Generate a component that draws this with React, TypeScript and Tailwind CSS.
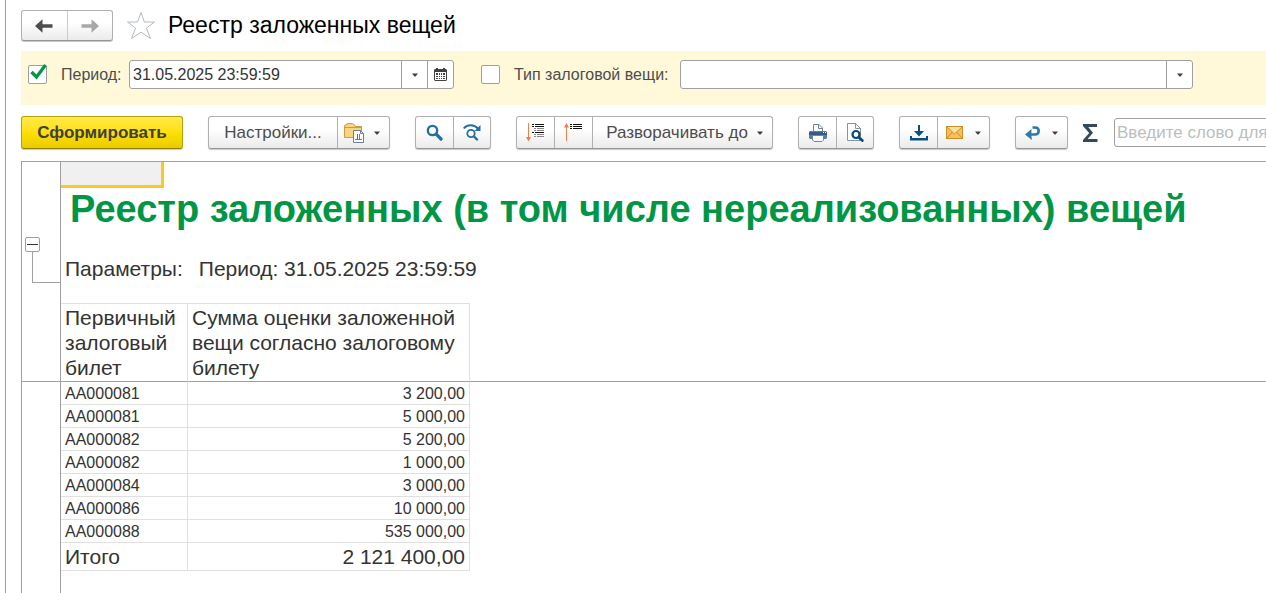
import type { ReactNode } from "react";

const rows: [string, string][] = [
  ["АА000081", "3 200,00"],
  ["АА000081", "5 000,00"],
  ["АА000082", "5 200,00"],
  ["АА000082", "1 000,00"],
  ["АА000084", "3 000,00"],
  ["АА000086", "10 000,00"],
  ["АА000088", "535 000,00"],
];

function Caret() {
  return (
    <svg width="6" height="4" viewBox="0 0 6 4" aria-hidden="true" className="shrink-0">
      <path d="M0 0.500H6L3.500 3.500H2.500Z" fill="#404040" />
    </svg>
  );
}

function Arrow({ color, flip }: { color: string; flip?: boolean }) {
  return (
    <svg width="18" height="14" viewBox="0 0 18 14" aria-hidden="true">
      <path
        d={flip ? "M18 7L10.500 0.300V5.300H0.500V8.700H10.500V13.700Z" : "M0 7L7.500 0.300V5.300H17.500V8.700H7.500V13.700Z"}
        fill={color}
      />
    </svg>
  );
}

function StarIcon() {
  return (
    <svg width="30" height="29" viewBox="0 0 30 29" aria-hidden="true">
      <path
        d="M15 1.500L18.400 11H28.500L20.400 17.100L24.500 27.500L15 21.200L5.500 27.500L9.600 17.100L1.500 11H11.600Z"
        fill="#fff"
        stroke="#b3bac2"
        strokeWidth="1"
      />
    </svg>
  );
}

function CalendarIcon() {
  return (
    <svg width="13" height="13" viewBox="0 0 13 13" aria-hidden="true">
      <path d="M1 1H2V0H4V1H9V0H11V1H12L13 2V12L12 13H1L0 12V2Z" fill="#404040" />
      <path d="M1 4H12V12H1Z" fill="#fff" />
      <path
        d="M2 5h2v2H2zM5 5h1v2H5zM7 5h1v2H7zM9 5h2v2H9zM2 8h2v1H2zM5 8h1v1H5zM7 8h1v1H7zM9 8h2v1H9zM2 10h2v1H2zM5 10h1v1H5zM7 10h1v1H7zM9 10h2v1H9z"
        fill="#404040"
      />
    </svg>
  );
}

function FolderReportIcon() {
  return (
    <svg width="21" height="21" viewBox="0 0 21 21" aria-hidden="true">
      <path d="M0.500 15.500V3.500L4 1.500H8.500L11 3.500V4.500H17.500V15.500Z" fill="#f6d480" stroke="#cf9b3c" />
      <path d="M1 5.500H17.500V7" fill="none" stroke="#cf9b3c" />
      <path d="M9.500 8.500H16.500L19.500 11.500V20.500H9.500Z" fill="#fff" stroke="#6d8096" />
      <path d="M16.500 8.500V11.500H19.500" fill="none" stroke="#6d8096" />
      <path d="M11 17.500H18" stroke="#6d8096" />
      <path d="M13.500 12V17" stroke="#e8321e" />
      <path d="M15.500 12V17" stroke="#2fa84a" />
    </svg>
  );
}

function SearchIcon() {
  return (
    <svg width="17" height="17" viewBox="0 0 17 17" aria-hidden="true">
      <circle cx="6.500" cy="6.500" r="4.700" fill="none" stroke="#22709f" strokeWidth="2.300" />
      <path d="M10.200 10.200L15 15" stroke="#22709f" strokeWidth="3.200" strokeLinecap="round" />
    </svg>
  );
}

function SearchNextIcon() {
  return (
    <svg width="18" height="17" viewBox="0 0 18 17" aria-hidden="true">
      <path d="M0.800 4.500C4 0 11 0 15 4.500" fill="none" stroke="#22709f" strokeWidth="2" />
      <path d="M17.500 1V7H11.500Z" fill="#22709f" />
      <circle cx="8" cy="9.500" r="3.700" fill="none" stroke="#22709f" strokeWidth="1.800" />
      <path d="M11 12.500L14 15.500" stroke="#22709f" strokeWidth="2.400" strokeLinecap="round" />
    </svg>
  );
}

function ExpandIcon() {
  return (
    <svg width="20" height="19" viewBox="0 0 20 19" aria-hidden="true">
      <path d="M2 0h1v14H2z" fill="#ee7f4b" />
      <path d="M0 14H5L2.500 18.500Z" fill="#ee7f4b" />
      <path d="M6 1h2v1H6zM9 1h9v1H9zM6 3h2v1H6zM9 3h9v1H9zM6 9h2v1H6zM9 9h9v1H9z" fill="#111" />
      <path d="M8 5h2v1H8zM11 5h7v1h-7zM8 7h2v1H8zM11 7h7v1h-7zM8 11h2v1H8zM11 11h7v1h-7zM8 13h2v1H8zM11 13h7v1h-7z" fill="#888" />
    </svg>
  );
}

function CollapseIcon() {
  return (
    <svg width="20" height="19" viewBox="0 0 20 19" aria-hidden="true">
      <path d="M2 4h1v14H2z" fill="#ee7f4b" />
      <path d="M0 4.500H5L2.500 0Z" fill="#ee7f4b" />
      <path d="M6 1h2v1H6zM9 1h9v1H9zM6 3h2v1H6zM9 3h9v1H9zM6 5h2v1H6zM9 5h9v1H9z" fill="#111" />
    </svg>
  );
}

function PrinterIcon() {
  return (
    <svg width="18" height="18" viewBox="0 0 18 18" aria-hidden="true">
      <path d="M4.500 8V0.500H10L13.500 4V8" fill="#fff" stroke="#71849c" />
      <path d="M9.500 0.500V4.500H13.500" fill="none" stroke="#71849c" />
      <path d="M1 7H17L18 8V14L17 15H1L0 14V8Z" fill="#5b7ca6" />
      <path d="M0 8h18v3H0z" fill="#365b88" />
      <path d="M3.500 11.500H14.500V16L13 17.500H5L3.500 16Z" fill="#fff" stroke="#71849c" />
      <path d="M14 8h1v1h-1zM16 8h1v1h-1z" fill="#fff" />
    </svg>
  );
}

function PreviewIcon() {
  return (
    <svg width="18" height="19" viewBox="0 0 18 19" aria-hidden="true">
      <path d="M1.500 0.500H9.500L14.500 5.500V17.500H1.500Z" fill="#fff" stroke="#8494a6" />
      <path d="M9.500 0.500V5.500H14.500" fill="none" stroke="#8494a6" />
      <circle cx="10" cy="11.500" r="3.500" fill="#fff" stroke="#0a4a78" strokeWidth="2.200" />
      <path d="M13 14.500L16.300 17.500" stroke="#0a4a78" strokeWidth="2.800" strokeLinecap="round" />
    </svg>
  );
}

function DownloadIcon() {
  return (
    <svg width="18" height="16" viewBox="0 0 18 16" aria-hidden="true">
      <path d="M8 0H10V6H14L9 11.500L4 6H8Z" fill="#0a4f80" />
      <path d="M0 11H2V13H16V11H18V15.500H0Z" fill="#0a4f80" />
    </svg>
  );
}

function MailIcon() {
  return (
    <svg width="17" height="13" viewBox="0 0 17 13" aria-hidden="true">
      <rect x="0.500" y="0.500" width="16" height="12" fill="#f4c15d" stroke="#cf8d27" />
      <path d="M1 1L8.500 8L16 1" fill="#fce0a0" stroke="#cf8d27" />
      <path d="M1 12L6.300 6.200M16 12L10.700 6.200" stroke="#cf8d27" />
    </svg>
  );
}

function ReturnIcon() {
  return (
    <svg width="16" height="14" viewBox="0 0 16 14" aria-hidden="true">
      <path d="M7.500 1.500H10C12.500 1.500 13.700 3 13.700 5C13.700 7.300 12.500 8.500 10 8.500H5" fill="none" stroke="#2f78a8" strokeWidth="2.600" />
      <path d="M0 8.500L6.500 3Q5.800 8.500 7 14Z" fill="#2f78a8" />
    </svg>
  );
}

function SigmaIcon() {
  return (
    <svg width="15" height="18" viewBox="0 0 15 18" aria-hidden="true">
      <path d="M0 0H14V3H5.200L10 8.700L4.600 15H14.500V18H0V16L6.200 9L0 2Z" fill="#35495a" />
    </svg>
  );
}

function Group({ children }: { children: ReactNode }) {
  return (
    <div className="flex h-[33px] shrink-0 divide-x divide-[#b0b0b0] rounded-[3px] border border-[#b0b0b0] border-b-[#959595] bg-linear-to-b from-white from-40% to-[#ebebeb] shadow-[0_1px_1px_#c8c8c8]">
      {children}
    </div>
  );
}

function Tool({ label, size, children }: { label: string; size: string; children: ReactNode }) {
  return (
    <button type="button" aria-label={label} className={`flex items-center justify-center ${size}`}>
      {children}
    </button>
  );
}

const field = "flex h-[29px] rounded-[3px] border border-[#a0a0a0] bg-white text-[#333]";
const headCell = "border-r border-t border-b border-r-[#e0e0e0] border-t-[#e0e0e0] border-b-[#a0a0a0] px-1 pt-px pb-px text-left align-top font-normal";
const bodyCell = "border-r border-b border-[#e0e0e0] px-1 pt-px pb-0";
const gutter = "border-x border-[#a0a0a0] p-0";

export default function App() {
  return (
    <div className="flex min-h-screen overflow-hidden bg-white pl-[5px] font-['Liberation_Sans',Arial,sans-serif] text-base text-[#4d4d4d]">
      <main className="flex min-w-0 flex-1 flex-col border-l border-[#a0a0a0] pl-[15px]">
        <header className="flex h-[51px] items-center">
          <div className="flex h-[31px] w-[92px] divide-x divide-[#ccc] rounded-[3px] border border-[#b0b0b0] border-b-[#959595] bg-linear-to-b from-white from-40% to-[#ebebeb] shadow-[0_1px_0_#c8c8c8]">
            <Tool label="Назад" size="flex-1">
              <Arrow color="#4d4d4d" />
            </Tool>
            <Tool label="Вперёд" size="flex-1">
              <Arrow color="#a8a8a8" flip />
            </Tool>
          </div>
          <button type="button" aria-label="Добавить в избранное" className="ml-[13px]">
            <StarIcon />
          </button>
          <h1 className="ml-3 pb-0.5 text-[23px]/[32px] text-black">Реестр заложенных вещей</h1>
        </header>

        <section className="flex h-[54px] items-start bg-[#fff9da] pt-[9px] pl-[7px]">
          <div className="flex h-[29px] items-center">
            <span className="relative flex">
              <input id="use-period" type="checkbox" defaultChecked aria-label="Использовать период" className="size-[19px] appearance-none rounded-[2px] border border-[#a0a0a0] bg-white" />
              <svg width="17" height="16" viewBox="0 0 17 16" aria-hidden="true" className="pointer-events-none absolute -top-px left-[2px]">
                <path d="M1.500 8L6.500 13L15.500 1" fill="none" stroke="#009646" strokeWidth="3.200" />
              </svg>
            </span>
            <label htmlFor="period" className="ml-[14px] w-[68px]">Период:</label>
            <div className={`${field} w-[325px]`}>
              <input id="period" type="text" defaultValue="31.05.2025 23:59:59" className="min-w-0 flex-1 px-[3px] outline-none" />
              <button type="button" aria-label="Выбрать из списка" className="flex w-[26px] items-center justify-center border-l border-[#a0a0a0]">
                <Caret />
              </button>
              <button type="button" aria-label="Календарь" className="flex w-[26px] items-center justify-center border-l border-[#a0a0a0]">
                <CalendarIcon />
              </button>
            </div>
          </div>
          <div className="ml-[27px] flex h-[29px] items-center">
            <input type="checkbox" aria-label="Использовать тип залоговой вещи" className="size-[19px] appearance-none rounded-[2px] border border-[#a0a0a0] bg-white" />
            <label htmlFor="kind" className="ml-[14px] w-[166px] whitespace-nowrap">Тип залоговой вещи:</label>
            <div className={`${field} relative w-[513px]`}>
              <select id="kind" defaultValue="" className="w-full appearance-none px-[3px] outline-none">
                <option value=""></option>
              </select>
              <span className="pointer-events-none absolute inset-y-0 right-0 flex w-[26px] items-center justify-center border-l border-[#a0a0a0]">
                <Caret />
              </span>
            </div>
          </div>
        </section>

        <div className="flex h-14 items-start gap-[25px] overflow-hidden pt-[11px] text-[17px]">
          <button type="button" className="h-[33px] w-[162px] shrink-0 rounded-[3px] border border-[#b5a010] border-b-[#8f7e00] bg-linear-to-b from-[#ffea45] via-[#ffe000] to-[#ebcb00] font-bold text-[#404040] shadow-[0_1px_1px_#c8c8c8]">
            Сформировать
          </button>
          <Group>
            <button type="button" className="w-[129px]">Настройки...</button>
            <Tool label="Варианты отчёта" size="w-[51px] gap-[9px] pr-1">
              <FolderReportIcon />
              <Caret />
            </Tool>
          </Group>
          <Group>
            <Tool label="Найти" size="w-[38px]"><SearchIcon /></Tool>
            <Tool label="Найти далее" size="w-[36px]"><SearchNextIcon /></Tool>
          </Group>
          <Group>
            <Tool label="Развернуть группы" size="w-[38px]"><ExpandIcon /></Tool>
            <Tool label="Свернуть группы" size="w-[38px]"><CollapseIcon /></Tool>
            <button type="button" className="flex w-[179px] items-center justify-center gap-[9px] pl-1">
              Разворачивать до
              <Caret />
            </button>
          </Group>
          <Group>
            <Tool label="Печать" size="w-[38px]"><PrinterIcon /></Tool>
            <Tool label="Предварительный просмотр" size="w-[36px]"><PreviewIcon /></Tool>
          </Group>
          <Group>
            <Tool label="Сохранить" size="w-[38px]"><DownloadIcon /></Tool>
            <Tool label="Отправить" size="w-[51px] gap-[12px]">
              <MailIcon />
              <Caret />
            </Tool>
          </Group>
          <div className="flex shrink-0 items-center">
            <Group>
              <Tool label="Вернуть" size="w-[51px] gap-[11px]">
                <ReturnIcon />
                <Caret />
              </Tool>
            </Group>
            <button type="button" aria-label="Сумма" className="mx-[15px]"><SigmaIcon /></button>
            <input
              type="search"
              aria-label="Поиск по отчёту"
              placeholder="Введите слово для фильтра"
              className="ml-px h-[29px] w-60 rounded-[3px] border border-[#a0a0a0] px-[2px] placeholder:text-[#bdbdbd]"
            />
          </div>
        </div>

        <div className="flex flex-1 flex-col border-t border-[#a0a0a0] text-[#333]">
          <table className="w-full table-fixed border-separate border-spacing-0">
            <colgroup>
              <col className="w-[40px]" />
              <col className="w-[127px]" />
              <col className="w-[282px]" />
              <col />
            </colgroup>
            <thead className="text-[21px]/[25px]">
              <tr className="h-[26px]">
                <td className={gutter} />
                <td colSpan={3} className="p-0">
                  <div className="h-[26px] w-[103px] border-r-3 border-b-3 border-[#fbc91f] bg-[#f0f0f0]" />
                </td>
              </tr>
              <tr className="h-[115px]">
                <td rowSpan={2} className={`${gutter} border-b align-top`}>
                  <div className="flex flex-col pt-[49px] pl-[3px]">
                    <button type="button" aria-label="Свернуть" className="flex size-[15px] items-center justify-center rounded-[2px] border border-[#a0a0a0] bg-white">
                      <span className="h-px w-[11px] bg-[#333]" />
                    </button>
                    <div className="ml-[7px] h-[31px] border-b border-l border-[#a0a0a0]" />
                  </div>
                </td>
                <td colSpan={3} className="p-0 align-top">
                  <h2 className="pl-[9px] text-[38px]/[42px] font-bold whitespace-nowrap text-[#009646]">
                    Реестр заложенных (в том числе нереализованных) вещей
                  </h2>
                  <p className="flex gap-4 px-1 pt-[26px]">
                    <span>Параметры:</span>
                    <span>Период: 31.05.2025 23:59:59</span>
                  </p>
                </td>
              </tr>
              <tr className="h-[79px]">
                <th scope="col" className={headCell}>Первичный залоговый билет</th>
                <th scope="col" className={headCell}>Сумма оценки заложенной вещи согласно залоговому билету</th>
                <td className="border-b border-[#a0a0a0] p-0" />
              </tr>
            </thead>
            <tbody className="text-base/[21px]">
              {rows.map(([ticket, sum], i) => (
                <tr key={i}>
                  <td className={gutter} />
                  <td className={bodyCell}>{ticket}</td>
                  <td className={`${bodyCell} text-right`}>{sum}</td>
                  <td className="p-0" />
                </tr>
              ))}
            </tbody>
            <tfoot className="text-[21px]/[26px]">
              <tr>
                <td className={gutter} />
                <td className={bodyCell}>Итого</td>
                <td className={`${bodyCell} text-right`}>2 121 400,00</td>
                <td className="p-0" />
              </tr>
            </tfoot>
          </table>
          <div className="w-[40px] flex-1 border-x border-[#a0a0a0]" />
        </div>
      </main>
    </div>
  );
}
